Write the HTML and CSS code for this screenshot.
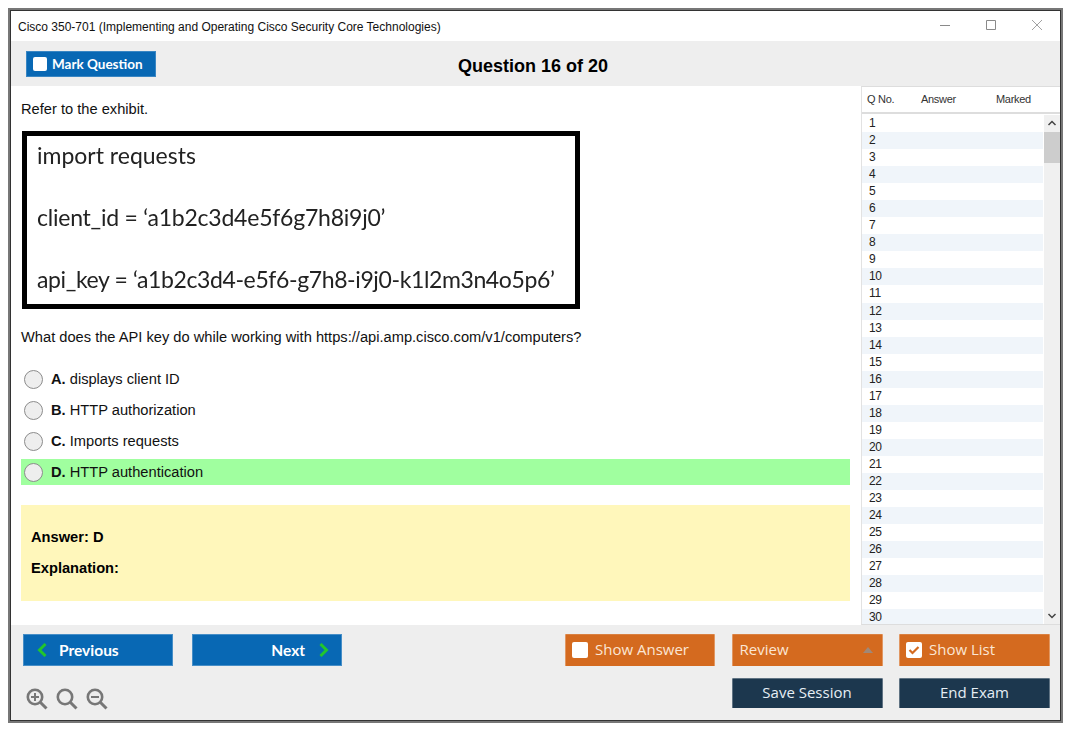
FILE: index.html
```html
<!DOCTYPE html>
<html lang="en">
<head>
<meta charset="utf-8">
<title>Cisco 350-701</title>
<link rel="stylesheet" href="styles.css">
</head>
<body>
<div class="window">
  <header class="titlebar">
    <span class="title">Cisco 350-701 (Implementing and Operating Cisco Security Core Technologies)</span>
    <div class="win-controls">
      <svg class="win-icon" viewBox="0 0 12 12"><path d="M1 6.500h10" stroke="#8a8a8a" fill="none"/></svg>
      <svg class="win-icon" viewBox="0 0 12 12"><path d="M1.500 1.500h9v9h-9z" stroke="#8a8a8a" fill="none"/></svg>
      <svg class="win-icon" viewBox="0 0 12 12"><path d="M1 1l10 10M11 1L1 11" stroke="#8a8a8a" fill="none" stroke-width=".8"/></svg>
    </div>
  </header>
  <div class="toolbar">
    <button class="mark"><span class="box"></span>Mark Question</button>
    <h1 class="qtitle">Question 16 of 20</h1>
  </div>
  <div class="middle">
    <main class="content">
      <p class="prompt">Refer to the exhibit.</p>
      <div class="exhibit">
        <div class="ln1">import requests</div>
        <div class="ln2">client_id = ‘a1b2c3d4e5f6g7h8i9j0’</div>
        <div class="ln3">api_key = ‘a1b2c3d4-e5f6-g7h8-i9j0-k1l2m3n4o5p6’</div>
      </div>
      <p class="question">What does the API key do while working with https://api.amp.cisco.com/v1/computers?</p>
      <ul class="options">
        <li class="option"><span class="radio"></span><span><b>A.</b> displays client ID</span></li>
        <li class="option"><span class="radio"></span><span><b>B.</b> HTTP authorization</span></li>
        <li class="option"><span class="radio"></span><span><b>C.</b> Imports requests</span></li>
        <li class="option correct"><span class="radio"></span><span><b>D.</b> HTTP authentication</span></li>
      </ul>
      <div class="answer">
        <div>Answer: D</div>
        <div>Explanation:</div>
      </div>
    </main>
    <aside class="qlist">
      <div class="qhead"><span class="c1">Q No.</span><span class="c2">Answer</span><span class="c3">Marked</span></div>
      <div class="qbody">
        <div class="rows">
          <div class="row">1</div><div class="row">2</div><div class="row">3</div><div class="row">4</div><div class="row">5</div>
          <div class="row">6</div><div class="row">7</div><div class="row">8</div><div class="row">9</div><div class="row">10</div>
          <div class="row">11</div><div class="row">12</div><div class="row">13</div><div class="row">14</div><div class="row">15</div>
          <div class="row">16</div><div class="row">17</div><div class="row">18</div><div class="row">19</div><div class="row">20</div>
          <div class="row">21</div><div class="row">22</div><div class="row">23</div><div class="row">24</div><div class="row">25</div>
          <div class="row">26</div><div class="row">27</div><div class="row">28</div><div class="row">29</div><div class="row">30</div>
        </div>
        <div class="scrollbar">
          <svg class="arrow" viewBox="0 0 16 17"><path d="M4.500 10l3.500-3.500 3.500 3.500" stroke="#444" stroke-width="1.500" fill="none"/></svg>
          <div class="track"><div class="thumb"></div></div>
          <svg class="arrow" viewBox="0 0 16 17"><path d="M4.500 7l3.500 3.500 3.500-3.500" stroke="#444" stroke-width="1.500" fill="none"/></svg>
        </div>
      </div>
    </aside>
  </div>
  <footer class="footer">
    <div class="foot-left">
      <div class="navs">
        <button class="btn nav prev">
          <svg class="chev" viewBox="0 0 11 14"><path d="M9.500 1L3.500 7l6 6" stroke="#22c52d" stroke-width="3" fill="none"/></svg>Previous
        </button>
        <button class="btn nav next">Next
          <svg class="chev" viewBox="0 0 11 14"><path d="M1.500 1l6 6-6 6" stroke="#22c52d" stroke-width="3" fill="none"/></svg>
        </button>
      </div>
      <div class="zooms">
        <svg class="zoom" viewBox="0 0 22 22"><circle cx="9" cy="9" r="7.200" fill="none" stroke="#777" stroke-width="2.600"/><path d="M14.500 14.500l6 6" stroke="#777" stroke-width="3"/><path d="M5 9h8M9 5v8" stroke="#777" stroke-width="2"/></svg>
        <svg class="zoom" viewBox="0 0 22 22"><circle cx="9" cy="9" r="7.200" fill="none" stroke="#777" stroke-width="2.600"/><path d="M14.500 14.500l6 6" stroke="#777" stroke-width="3"/></svg>
        <svg class="zoom" viewBox="0 0 22 22"><circle cx="9" cy="9" r="7.200" fill="none" stroke="#777" stroke-width="2.600"/><path d="M14.500 14.500l6 6" stroke="#777" stroke-width="3"/><path d="M5 9h8" stroke="#777" stroke-width="2"/></svg>
      </div>
    </div>
    <div class="foot-right">
      <button class="btn orange"><span class="box"></span>Show Answer</button>
      <button class="btn orange review">Review<span class="caret"></span></button>
      <button class="btn orange"><span class="box"><svg viewBox="0 0 16 16"><path d="M3.500 8l3 3 6-6" stroke="#d46a1f" stroke-width="2.200" fill="none"/></svg></span>Show List</button>
      <span class="spacer"></span>
      <button class="btn navy">Save Session</button>
      <button class="btn navy">End Exam</button>
    </div>
  </footer>
</div>
</body>
</html>
```
FILE: styles.css
```css
* { box-sizing: border-box; }
html, body { margin: 0; padding: 0; background: #fff; }
body { padding: 8px; font-family: "Liberation Sans", Arial, sans-serif; }
button { margin: 0; font: inherit; cursor: pointer; }

.window {
  width: 1055px;
  height: 715px;
  display: flex;
  flex-direction: column;
  border: 2px solid #777;
  outline: 1px solid #333;
  outline-offset: -3px;
  padding: 1px;
  background: #fff;
}

.titlebar {
  height: 30px;
  flex: none;
  display: flex;
  align-items: center;
  justify-content: space-between;
  padding: 2px 0 0 7px;
  background: #fff;
}
.title { font-size: 12px; color: #111; }
.win-controls { display: flex; gap: 34px; padding-right: 17px; margin-top: -4px; }
.win-icon { width: 12px; height: 12px; display: block; }

.toolbar {
  height: 45px;
  flex: none;
  display: flex;
  align-items: center;
  background: #eee;
  position: relative;
  padding: 0 0 0 15px;
}
.mark {
  width: 130px;
  height: 26px;
  margin-top: 1px;
  display: flex;
  align-items: center;
  gap: 5px;
  padding: 0 0 0 7px;
  border: 0;
  box-shadow: inset 0 0 0 1px rgba(255, 255, 255, .2);
  background: #0868b4;
  color: #fff;
  font-family: Lato, "Open Sans", sans-serif;
  font-weight: 700;
  font-size: 13.5px;
}
.box {
  width: 14px;
  height: 14px;
  flex: none;
  display: block;
  background: #fff;
  border-radius: 2px;
}
.box svg { display: block; width: 16px; height: 16px; }
.qtitle {
  position: absolute;
  left: 0;
  right: 0;
  top: 14px;
  margin: 0;
  text-align: center;
  font-size: 18px;
  line-height: 22px;
  font-weight: 700;
  color: #000;
  padding-right: 5px;
}

.middle { flex: 1; min-height: 0; display: flex; background: #fff; }
.content {
  width: 850px;
  flex: none;
  padding: 0 11px 0 10px;
  color: #111;
  font-size: 14.67px;
}
.prompt { margin: 14px 0 0; line-height: 18px; }
.exhibit {
  width: 558px;
  height: 178px;
  margin: 13px 0 0 1px;
  border: 5px solid #000;
  padding: 0 0 0 10px;
  display: flex;
  flex-direction: column;
  gap: 26px;
  font-family: Lato, "Open Sans", sans-serif;
  font-size: 23px;
  line-height: 36px;
  color: #222;
  white-space: nowrap;
  filter: blur(.3px);
}
.ln1 { margin-top: 1px; }
.ln2 { letter-spacing: -.23px; }
.ln3 { letter-spacing: -.38px; }
.question { margin: 19px 0 0; line-height: 18px; }
.options { list-style: none; margin: 20px 0 0; padding: 0; display: flex; flex-direction: column; gap: 5px; }
.option {
  height: 26px;
  display: flex;
  align-items: center;
  gap: 8px;
  padding-left: 3px;
}
.correct { background: #a0ff9f; }
.radio {
  width: 19px;
  height: 19px;
  flex: none;
  border-radius: 50%;
  background: #eee;
  border: 1px solid #8c8c8c;
}
.answer {
  height: 96px;
  margin-top: 20px;
  padding: 23px 10px 0;
  display: flex;
  flex-direction: column;
  gap: 12px;
  background: #fff7bb;
  font-weight: 700;
  color: #000;
  line-height: 18px;
}
.answer div + div { margin-top: 1px; }

.qlist {
  flex: 1;
  min-width: 0;
  display: flex;
  flex-direction: column;
  border-left: 1px solid #e2e2e2;
  border-top: 1px solid #ddd;
  border-bottom: 1px solid #ddd;
  color: #222;
}
.qhead {
  height: 27px;
  flex: none;
  display: flex;
  align-items: center;
  padding-bottom: 2px;
  font-size: 11px;
  letter-spacing: -.3px;
  color: #333;
  border-bottom: 2px solid #ddd;
}
.c1 { width: 59px; padding-left: 5px; }
.c2 { width: 75px; }
.qbody { flex: 1; min-height: 0; display: flex; overflow: hidden; padding-top: 1px; }
.rows { flex: 1; min-width: 0; }
.row {
  height: 17.05px;
  line-height: 17px;
  font-size: 12px;
  padding-left: 7px;
  letter-spacing: -.3px;
}
.row:nth-child(even) { background: #f0f5fa; }
.scrollbar { width: 16px; flex: none; display: flex; flex-direction: column; background: #f0f0f0; margin-left: 1px; }
.arrow { width: 16px; height: 17px; display: block; flex: none; background: #f0f0f0; }
.track { flex: 1; }
.thumb { height: 31px; background: #cdcdcd; }

.footer {
  height: 95px;
  flex: none;
  display: flex;
  justify-content: space-between;
  padding: 9px 10px 0 12px;
  background: #eee;
}
.foot-left { display: flex; flex-direction: column; }
.navs { display: flex; gap: 19px; }
.btn {
  width: 151px;
  height: 32px;
  border: 0;
  color: #fff;
  display: flex;
  align-items: center;
  padding: 0;
}
.nav {
  width: 150px;
  background: #0868b4;
  box-shadow: inset 0 0 0 1px rgba(255, 255, 255, .25);
  font-family: Lato, "Open Sans", sans-serif;
  font-weight: 700;
  font-size: 15.5px;
}
.prev { padding-left: 13px; gap: 12px; }
.next { justify-content: flex-end; padding-right: 12px; gap: 14px; }
.chev { width: 11px; height: 14px; display: block; flex: none; }
.zooms { display: flex; gap: 8px; margin: 22px 0 0 3px; }
.zoom { width: 22px; height: 22px; display: block; }

.foot-right {
  width: 485px;
  display: grid;
  grid-template-columns: 150px 151px 151px;
  column-gap: 16.5px;
  row-gap: 12px;
  align-content: start;
  font-family: "Open Sans", "Noto Sans", sans-serif;
  font-size: 15px;
}
.orange {
  width: auto;
  background: #d46a1f;
  box-shadow: inset 1px 0 0 rgba(255, 255, 255, .3), inset -1px 0 0 rgba(255, 255, 255, .3), inset 0 1px 0 rgba(255, 255, 255, .15);
  padding: 0 0 2px 7px;
  gap: 7px;
  color: #fbe6d5;
  font-family: inherit;
  font-size: 15px;
}
.orange .box { width: 16px; height: 16px; margin-top: 2px; }
.review { justify-content: space-between; padding-left: 8px; padding-right: 10px; }
.caret {
  width: 0;
  height: 0;
  margin-top: 2px;
  border-left: 5px solid transparent;
  border-right: 5px solid transparent;
  border-bottom: 6px solid #a08878;
}
.navy {
  width: auto;
  height: 30px;
  background: #1c374e;
  box-shadow: inset 1px 0 0 rgba(255, 255, 255, .3), inset -1px 0 0 rgba(255, 255, 255, .3), inset 0 1px 0 rgba(255, 255, 255, .3);
  justify-content: center;
  padding-bottom: 2px;
  color: #e6eef5;
  font-family: inherit;
  font-size: 15px;
}
.spacer { display: block; }
```
